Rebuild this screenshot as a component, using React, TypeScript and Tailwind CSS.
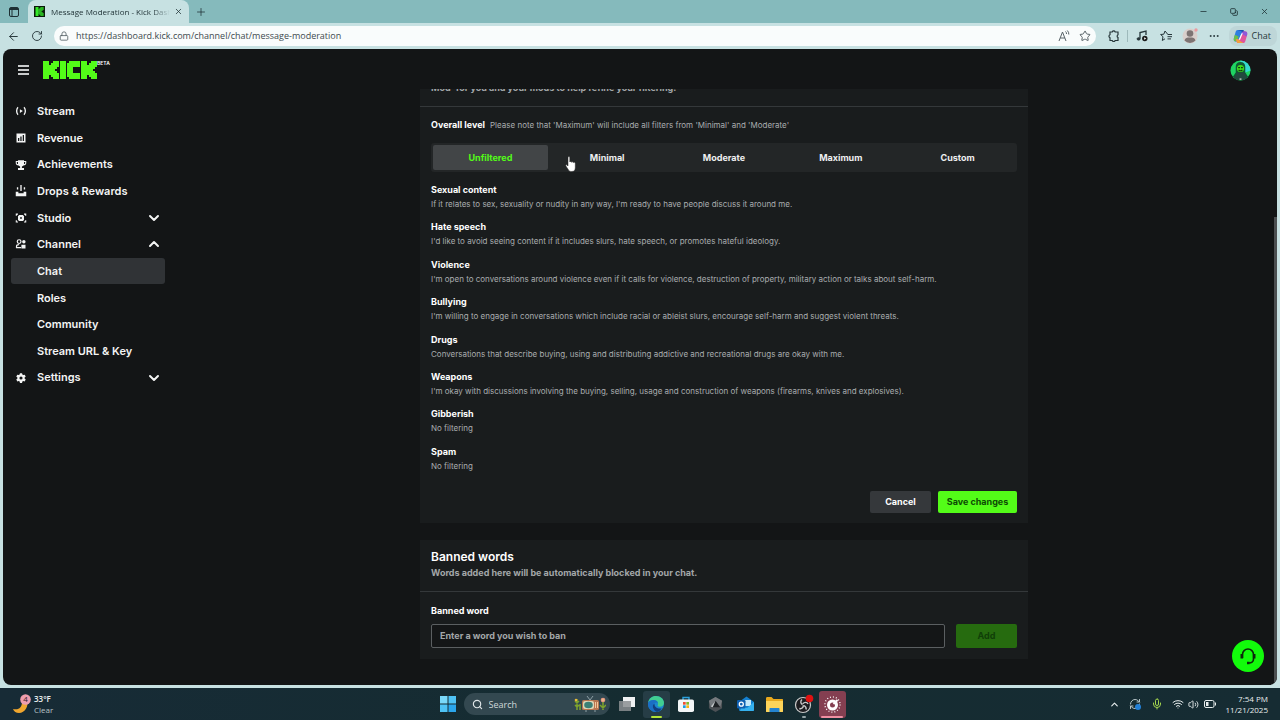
import React from "react";
import {
  ArrowLeft,
  ChevronDown,
  ChevronUp,
  Copy,
  Ellipsis,
  Lock,
  Mic,
  Minus,
  Plus,
  RefreshCw,
  RotateCw,
  Search,
  Star,
  Volume2,
  Wifi,
  X,
} from "lucide-react";

const FILTERS = [
  {
    title: "Sexual content",
    text: "If it relates to sex, sexuality or nudity in any way, I'm ready to have people discuss it around me.",
  },
  {
    title: "Hate speech",
    text: "I'd like to avoid seeing content if it includes slurs, hate speech, or promotes hateful ideology.",
  },
  {
    title: "Violence",
    text: "I'm open to conversations around violence even if it calls for violence, destruction of property, military action or talks about self-harm.",
  },
  {
    title: "Bullying",
    text: "I'm willing to engage in conversations which include racial or ableist slurs, encourage self-harm and suggest violent threats.",
  },
  {
    title: "Drugs",
    text: "Conversations that describe buying, using and distributing addictive and recreational drugs are okay with me.",
  },
  {
    title: "Weapons",
    text: "I'm okay with discussions involving the buying, selling, usage and construction of weapons (firearms, knives and explosives).",
  },
  { title: "Gibberish", text: "No filtering" },
  { title: "Spam", text: "No filtering" },
];

const LEVELS = ["Unfiltered", "Minimal", "Moderate", "Maximum", "Custom"];

function KickMark({ x = 0 }: { x?: number }) {
  return (
    <g transform={`translate(${x} 0)`}>
      <rect x="0" y="0" width="3" height="9" />
      <rect x="3" y="2" width="1" height="5" />
      <rect x="4" y="1" width="1" height="7" />
      <rect x="5" y="0" width="1" height="9" />
      <rect x="6" y="0" width="1" height="4" />
      <rect x="6" y="5" width="1" height="4" />
      <rect x="7" y="0" width="1" height="3" />
      <rect x="7" y="6" width="1" height="3" />
    </g>
  );
}

function KickLogo() {
  return (
    <svg
      viewBox="0 0 27 9"
      className="h-[18px] w-[54px] fill-[#53fc18]"
      shapeRendering="crispEdges"
      role="img"
      aria-label="Kick"
    >
      <KickMark />
      <rect x="8.5" y="0" width="3" height="9" />
      <rect x="13" y="0" width="5.5" height="3" />
      <rect x="12" y="1" width="3" height="7" />
      <rect x="13" y="6" width="5.5" height="3" />
      <KickMark x={19} />
    </svg>
  );
}

function StreamIcon() {
  return (
    <svg viewBox="0 0 16 16" className="size-3" fill="none" stroke="currentColor" strokeWidth="1.8">
      <path d="M4 3C1.600 5.600 1.600 10.400 4 13M12 3C14.400 5.600 14.400 10.400 12 13" />
      <path d="M6.500 5.500v5l4-2.500z" fill="currentColor" stroke="none" />
    </svg>
  );
}

function RevenueIcon() {
  return (
    <svg viewBox="0 0 16 16" className="size-3" fill="currentColor" fillRule="evenodd">
      <path d="M2 2h12v12H2zM4 8v4h1.700V8zM7.100 6v6h1.700V6zM10.300 4v8H12V4z" />
    </svg>
  );
}

function TrophyIcon() {
  return (
    <svg viewBox="0 0 16 16" className="size-3" fill="currentColor" fillRule="evenodd">
      <path d="M4 1.500h8v1.200h3v2.500c0 2-1.500 3-3.300 3.100A4 4 0 0 1 9.200 10v2H12v2.500H4V12h2.800v-2a4 4 0 0 1-2.500-1.700C2.500 8.200 1 7.200 1 5.200V2.700h3zM2.400 4v1.200c0 .9.500 1.400 1.600 1.600V4zM12 4v2.800c1.100-.2 1.600-.7 1.600-1.600V4z" />
    </svg>
  );
}

function DropsIcon() {
  return (
    <svg viewBox="0 0 16 16" className="size-3" fill="currentColor">
      <path d="M1 9h3.500v2h7V9H15v6H1z" />
      <path d="M7.100 0h1.800v8H7.100zM2.500 3h1.800v3H2.500zM11.700 3h1.800v3h-1.800z" />
    </svg>
  );
}

function StudioIcon() {
  return (
    <svg viewBox="0 0 16 16" className="size-3" fill="currentColor" fillRule="evenodd">
      <path d="M1 2h3v1.500H2.500V5H1zM12 2h3v3h-1.500V3.500H12zM1 11h1.500v1.500H4V14H1zM13.500 11H15v3h-3v-1.500h1.500z" />
      <path d="M5.500 4h5L12 5.500v5L10.500 12h-5L4 10.500v-5zM8 6.800a1.200 1.200 0 1 0 0 2.400 1.200 1.200 0 0 0 0-2.400z" />
    </svg>
  );
}

function ChannelIcon() {
  return (
    <svg viewBox="0 0 16 16" className="size-3" fill="none" stroke="currentColor" strokeWidth="1.600">
      <circle cx="5.500" cy="4.800" r="2.500" />
      <path d="M8 12.700H2v-1.500C2 9.600 3.200 8.800 5.500 8.800" />
      <circle cx="11.800" cy="5" r="2.300" fill="currentColor" stroke="none" />
      <path d="M8.500 9H14v5H8.500z" fill="currentColor" stroke="none" />
    </svg>
  );
}

function SettingsIcon() {
  return (
    <svg viewBox="0 0 16 16" className="size-3" fill="currentColor" fillRule="evenodd">
      <path d="M6.600 1.500h2.800l.4 1.900 1.200.7 1.900-.6 1.400 2.400-1.500 1.300v1.600l1.500 1.300-1.400 2.400-1.900-.6-1.200.7-.4 1.900H6.600l-.4-1.900-1.200-.7-1.900.6-1.400-2.400 1.500-1.300V7.200L1.700 5.900l1.400-2.400 1.900.6 1.200-.7zM8 5.900a2.100 2.100 0 1 0 0 4.200 2.100 2.100 0 0 0 0-4.200z" />
    </svg>
  );
}

const NAV = [
  { label: "Stream", icon: <StreamIcon /> },
  { label: "Revenue", icon: <RevenueIcon /> },
  { label: "Achievements", icon: <TrophyIcon /> },
  { label: "Drops & Rewards", icon: <DropsIcon /> },
  { label: "Studio", icon: <StudioIcon />, chevron: "down" },
  { label: "Channel", icon: <ChannelIcon />, chevron: "up" },
  { label: "Chat", active: true },
  { label: "Roles" },
  { label: "Community" },
  { label: "Stream URL & Key" },
  { label: "Settings", icon: <SettingsIcon />, chevron: "down" },
];

function TabStrip() {
  return (
    <div className="flex h-[23px] shrink-0 items-stretch bg-[#85babc] text-[#1d2f33]">
      <button aria-label="Tab actions" className="flex w-7 items-center justify-center">
        <svg viewBox="0 0 10 10" className="size-[10px]" fill="none" stroke="currentColor">
          <rect x="0.500" y="0.500" width="9" height="9" rx="1.500" />
          <path d="M1 2h8" strokeWidth="2" />
          <path d="M3 2v7" />
        </svg>
      </button>
      <div className="flex w-[161px] items-center rounded-t-lg bg-[#c7e1e2] pl-[6px]">
        <svg viewBox="-1 -1 10 11" className="size-[11px] shrink-0 bg-[#0b1a0b] fill-[#35e82a]">
          <KickMark />
        </svg>
        <span className="ml-[6px] w-[119px] whitespace-nowrap text-[8px] [mask-image:linear-gradient(to_right,black_85%,transparent)]">
          Message Moderation - Kick Dash
        </span>
        <button aria-label="Close tab" className="ml-1">
          <X className="size-[9px]" />
        </button>
      </div>
      <button aria-label="New tab" className="ml-1.5 flex items-center">
        <Plus className="size-3" strokeWidth={1.5} />
      </button>
      <div className="ml-auto flex items-center gap-[22px] pr-[11px]">
        <button aria-label="Minimize">
          <Minus className="size-[9px]" />
        </button>
        <button aria-label="Restore">
          <Copy className="size-2 -scale-x-100 rotate-90" strokeWidth={2.500} />
        </button>
        <button aria-label="Close window">
          <X className="size-[9px]" />
        </button>
      </div>
    </div>
  );
}

function CopilotIcon() {
  return (
    <svg viewBox="0 0 16 16" className="size-[15px]">
      <path d="M5 1h5c1.500 0 2 1 2.400 2.500L13 5h-2.500c-1.500 0-2 .8-2.400 2L6.800 11c-.5 1.500-1 2.300-2.300 2.300H3C1 13.300.4 11.500 1 9.500l1.700-6C3.200 1.800 3.800 1 5 1z" fill="#2f7fe0" />
      <path d="M5 1h5c1.500 0 2 1 2.400 2.500L13 5h-2.500L9 2.500z" fill="#1c4fb5" />
      <path d="M1 9.500l1-3.500 4 2-1.200 4-1.800 1.300C1 13.300.4 11.500 1 9.500z" fill="#6cc04a" />
      <path d="M11 15H6c-1.500 0-2-1-2.400-2.500L3 11h2.500c1.500 0 2-.8 2.400-2L9.200 5c.5-1.500 1-2.300 2.300-2.300H13c2 0 2.600 1.800 2 3.800l-1.700 6C12.800 14.200 12.200 15 11 15z" fill="#e0559d" />
      <path d="M11 15H6c-1.500 0-2-1-2.400-2.500L3 11h2.500L8 13z" fill="#f4a13c" />
      <path d="M9.200 5c.5-1.500 1-2.300 2.300-2.300H13c2 0 2.600 1.800 2 3.800l-.5 1.500z" fill="#8f58d8" />
      <path d="M9.200 4.500h1.300L7.500 11.500H6z" fill="#fff" />
    </svg>
  );
}

function Toolbar() {
  return (
    <div className="flex h-[26px] shrink-0 items-center bg-[#c7e1e2] text-[#26363a]">
      <button aria-label="Back" className="ml-[7px]">
        <ArrowLeft className="size-[13px]" strokeWidth={1.800} />
      </button>
      <button aria-label="Refresh" className="ml-[11px]">
        <RotateCw className="size-3" strokeWidth={1.800} />
      </button>
      <div className="ml-[11px] flex h-5 flex-1 items-center rounded-full bg-[#f9fcfc] px-[5px] text-[#566166]">
        <Lock className="size-[10px]" />
        <input
          aria-label="Address"
          defaultValue="https://dashboard.kick.com/channel/chat/message-moderation"
          className="ml-[7px] min-w-0 flex-1 bg-transparent text-[9px] text-[#3d4a4e] outline-none"
        />
        <button aria-label="Read aloud" className="flex">
          <svg viewBox="0 0 12 12" className="size-3" fill="none" stroke="currentColor">
            <path d="M1 11 4.500 2 8 11M2.300 8h4.500M7.500 1.500a3 3 0 0 1 1 2.500M9.300.5A5 5 0 0 1 10.800 4.500" />
          </svg>
        </button>
        <button aria-label="Add to favorites" className="ml-[9px]">
          <Star className="size-3" />
        </button>
      </div>
      <button aria-label="Extensions" className="ml-3">
        <svg viewBox="0 0 12 12" className="size-3" fill="none" stroke="currentColor" strokeWidth="1.200">
          <path d="M2 2h2.200a1.600 1.600 0 0 1 3 0H10v2.800a1.500 1.500 0 0 0 0 2.700V10.500H7.200a1.600 1.600 0 0 1-3 0H2V7.700a1.600 1.600 0 0 1 0-3z" />
        </svg>
      </button>
      <span className="ml-[7px] h-3 w-px bg-[#9db9bb]" />
      <button aria-label="Music" className="ml-2">
        <svg viewBox="0 0 12 12" className="size-3" fill="none" stroke="currentColor">
          <path d="M4 8.500V2.500l6-1.500v4" strokeWidth="1.300" />
          <ellipse cx="2.600" cy="8.900" rx="1.500" ry="1.200" fill="currentColor" />
          <circle cx="8.800" cy="8.500" r="2.700" fill="#1b1b1b" stroke="none" />
          <path d="M8.200 7.300v2.400l2-1.200z" fill="#fff" stroke="none" />
        </svg>
      </button>
      <button aria-label="Favorites" className="ml-3">
        <svg viewBox="0 0 12 12" className="size-3" fill="none" stroke="currentColor">
          <path d="M7.500 4 5 1 3.800 4.200.6 4.500 3 6.700 2.300 10.500 5 8.800M7.500 4.500H12M7.500 6.700H12M7.500 8.900H11" />
        </svg>
      </button>
      <button aria-label="Profile" className="ml-[10px]">
        <svg viewBox="0 0 16 16" className="size-4">
          <circle cx="8" cy="8" r="7.500" fill="#d9cfcb" />
          <circle cx="8" cy="5.500" r="3.300" fill="#7d7473" />
          <path d="M2.500 12.500C3 10 5 9.500 8 9.500s5 .5 5.500 3A7.500 7.500 0 0 1 2.500 12.500z" fill="#7d7473" />
          <circle cx="14" cy="2" r="1.700" fill="#ea9ba0" />
        </svg>
      </button>
      <button aria-label="More" className="ml-[10px]">
        <Ellipsis className="size-3" />
      </button>
      <button className="mr-[3px] ml-[9px] flex h-5 items-center gap-1 rounded-lg bg-[#bed6d8] px-1 pr-[6px] text-[9px]">
        <CopilotIcon />
        Chat
      </button>
    </div>
  );
}

function PageHeader() {
  return (
    <header className="flex h-10 shrink-0 items-center pt-0.5 pr-[26px] pl-[15px]">
      <button aria-label="Menu" className="flex w-[11px] flex-col gap-[2px]">
        <span className="h-[2px] bg-[#c9cbcc]" />
        <span className="h-[2px] bg-[#c9cbcc]" />
        <span className="h-[2px] bg-[#c9cbcc]" />
      </button>
      <a href="#kick" className="ml-[14px] flex items-start">
        <KickLogo />
        <span className="text-[5px] leading-[5px] font-semibold text-white">BETA</span>
      </a>
      <button aria-label="Account" className="ml-auto">
        <svg viewBox="0 0 22 22" className="size-[21px]">
          <circle cx="11" cy="11" r="10.500" fill="#1fd463" />
          <path d="M11 .5A10.500 10.500 0 0 1 21.500 11L16 13 11 3z" fill="#35d9d0" />
          <path d="M3 17.500 6 13V7c0-3 2-5 5-5s5 2 5 5v6l3 4.500A10.500 10.500 0 0 1 3 17.500z" fill="#0f5a33" />
          <path d="M4 18.500 7 13h8l3 5.500A10.500 10.500 0 0 1 4 18.500z" fill="#23483e" />
          <circle cx="11" cy="9" r="3.700" fill="#3fe01d" />
          <path d="M8.500 8h2M11.500 8h2M9 10.500q2 1.500 4 0" stroke="#123d12" strokeWidth="1.200" fill="none" />
          <path d="M11 19v2" stroke="#a8b3ae" strokeWidth="2" />
        </svg>
      </button>
    </header>
  );
}

function Sidebar() {
  return (
    <nav className="w-[173px] shrink-0 pt-[9px] pr-[11px] pl-2">
      <ul className="grid h-[293px] auto-rows-fr text-[11px] font-semibold text-[#f3f4f4]">
        {NAV.map((item) => (
          <li key={item.label}>
            <a
              href="#nav"
              className={`flex h-full items-center rounded-[3px] pr-[3px] pl-1 ${item.active ? "bg-[#303336]" : ""}`}
            >
              <span className="w-[22px]">{item.icon}</span>
              {item.label}
              {item.chevron === "down" && <ChevronDown className="ml-auto size-4" strokeWidth={3} />}
              {item.chevron === "up" && <ChevronUp className="ml-auto size-4" strokeWidth={3} />}
            </a>
          </li>
        ))}
      </ul>
    </nav>
  );
}

function ModerationCard() {
  return (
    <section className="shrink-0 bg-[#191c1d]">
      <p className="border-b border-[#34383a] px-[11px] pt-2 pb-[11px] text-[9px] leading-[14px] font-bold text-[#a3a7a9]">
        Mod&apos; for you and your mods to help refine your filtering.
      </p>
      <div className="px-[11px] pt-[11px] pb-[10px]">
        <div className="flex items-center gap-[5px] leading-[14px]">
          <h2 className="text-[9px] font-bold text-white">Overall level</h2>
          <p className="text-[8px] text-[#a9adaf]">
            Please note that &apos;Maximum&apos; will include all filters from &apos;Minimal&apos; and &apos;Moderate&apos;
          </p>
        </div>
        <div className="mt-[11px] grid h-[29px] grid-cols-5 gap-0.5 rounded-[3px] bg-[#232627] p-0.5 text-[9px] font-bold">
          {LEVELS.map((level, i) => (
            <button
              key={level}
              className={`rounded-[2px] ${i === 0 ? "bg-[#424547] text-[#53fc18]" : "text-[#eeeff0]"}`}
            >
              {level}
            </button>
          ))}
        </div>
        <dl className="mt-[10px] grid h-[299px] auto-rows-fr">
          {FILTERS.map((f) => (
            <div key={f.title}>
              <dt className="text-[9px] leading-[15px] font-bold text-white">{f.title}</dt>
              <dd className="text-[8px] leading-[14px] text-[#a9adaf]">{f.text}</dd>
            </div>
          ))}
        </dl>
        <div className="mt-[10px] flex justify-end gap-[7px] text-[9px] font-bold">
          <button className="h-[22px] min-w-[61px] rounded-[2px] bg-[#35383b] px-2 text-white">Cancel</button>
          <button className="h-[22px] min-w-[79px] rounded-[2px] bg-[#53fc18] px-2 text-[#0d4a05]">
            Save changes
          </button>
        </div>
      </div>
    </section>
  );
}

function BannedWordsCard() {
  return (
    <section className="shrink-0 bg-[#191c1d]">
      <div className="border-b border-[#34383a] px-[11px] pt-2 pb-[10px]">
        <h2 className="text-[12px] leading-[17px] font-semibold text-white">Banned words</h2>
        <p className="text-[9px] leading-4 font-bold text-[#a3a7a9]">
          Words added here will be automatically blocked in your chat.
        </p>
      </div>
      <form className="px-[11px] pt-[11px] pb-[11px]">
        <label htmlFor="banned-word" className="block text-[9px] leading-4 font-bold text-white">
          Banned word
        </label>
        <div className="mt-[5px] flex h-6 gap-[11px]">
          <input
            id="banned-word"
            placeholder="Enter a word you wish to ban"
            className="min-w-0 flex-1 rounded-[2px] border border-[#5b5f61] bg-[#141617] px-2 text-[9px] font-bold text-white placeholder:text-[#a3a7a9]"
          />
          <button type="button" className="w-[61px] rounded-[2px] bg-[#266b0f] text-[9px] font-bold text-[#103f08]">
            Add
          </button>
        </div>
      </form>
    </section>
  );
}

function HandCursor() {
  return (
    <svg viewBox="0 0 11 16" className="pointer-events-none absolute top-[156px] left-[565px] h-4 w-[11px]">
      <path
        d="M3 1.500C3 .3 4.800.3 4.800 1.500V6c.3-.8 1.700-.7 1.800.3.400-.8 1.700-.6 1.800.4.500-.6 1.900-.4 1.900.8v4c0 2.700-1 4-3.500 4-2.200 0-3-.8-3.800-2.300L.9 10c-.5-1 .7-1.600 1.300-.8L3 10z"
        fill="#fff"
        stroke="#222"
        strokeWidth="0.500"
      />
    </svg>
  );
}

function SupportButton() {
  return (
    <button
      aria-label="Support"
      className="absolute right-[13px] bottom-[13px] flex size-8 items-center justify-center rounded-full bg-[#12fb0b]"
    >
      <svg viewBox="0 0 18 18" className="size-[18px]" fill="none" stroke="#0d260c" strokeWidth="1.600">
        <path d="M3.500 11V7.500a5.500 5.500 0 0 1 11 0V12c0 2.500-2 4-5 4" />
        <path d="M2.800 7v4.500M15.200 7v4.500" strokeWidth="2.600" />
        <path d="M8 16h2.500" strokeWidth="2.400" />
      </svg>
    </button>
  );
}

function TaskbarApps() {
  return (
    <div className="ml-[5px] flex items-center">
      <button aria-label="Start">
        <svg viewBox="0 0 16 16" className="size-4" fill="#4fc3f5">
          <path d="M0 0h7.500v7.500H0z" fill="#7ad9fa" />
          <path d="M8.500 0H16v7.500H8.500zM0 8.500h7.500V16H0z" />
          <path d="M8.500 8.500H16V16H8.500z" fill="#2ba6ec" />
        </svg>
      </button>
      <label className="ml-2 flex h-[22px] w-[146px] items-center rounded-full bg-[#334850] pr-1 pl-2">
        <Search className="size-[11px] text-[#dfe6e8]" strokeWidth={2.500} />
        <input
          aria-label="Search"
          placeholder="Search"
          className="ml-[6px] w-0 flex-1 bg-transparent text-[9px] placeholder:text-[#cfd8da]"
        />
        <svg viewBox="0 0 32 16" className="h-4 w-8">
          <path d="M3 3v11M1 5l2 2 2-2M1 9l2 2 2-2M6 8v6M29 5v9M26 9l3 3 3-3" stroke="#7da32c" strokeWidth="1.500" fill="none" />
          <circle cx="2" cy="4" r="1.300" fill="#e8b93d" />
          <circle cx="29" cy="4" r="2.300" fill="#e79a84" />
          <circle cx="29" cy="4" r="0.800" fill="#f7e08a" />
          <rect x="8" y="4" width="17" height="10" rx="1.500" fill="#b87550" />
          <rect x="9" y="5" width="11" height="8" rx="2" fill="#dbd6b8" />
          <ellipse cx="14.500" cy="9" rx="4.300" ry="3.200" fill="#3c8076" />
          <path d="M21.500 6v6M23.500 6v6" stroke="#f2c69b" />
          <path d="M13 0l3 4 3-4M11 15h2M20 15h2" stroke="#8e9fa5" fill="none" />
        </svg>
      </label>
      <button aria-label="Task view" className="ml-[9px]">
        <svg viewBox="0 0 16 14" className="h-[14px] w-4">
          <rect x="4" y="0" width="12" height="10" fill="#eff1f2" />
          <rect x="0" y="4" width="12" height="10" fill="#8b8f92" opacity="0.850" />
        </svg>
      </button>
      <button aria-label="Edge" className="ml-2 flex h-[27px] w-[27px] flex-col items-center justify-between rounded-[3px] bg-[#263d46] pt-[5px]">
        <svg viewBox="0 0 16 16" className="size-4">
          <circle cx="8" cy="8" r="8" fill="#1c87d0" />
          <path d="M0 7C1 2.500 4 0 8 0c4.500 0 8 3 8 6.800 0 2.500-1.800 4-4.200 4-1.800 0-2.600-.7-2-1.700C10.800 6.500 8.700 4 5.500 4 3 4 .8 5.300 0 7z" fill="#41cd91" />
          <path d="M0 7c.8-1.700 3-3 5.500-3 2.300 0 4 1 4.500 3-3 -1.500-6 .7-5 4.500.5 2 2 3.500 4 4.400A8 8 0 0 1 0 7z" fill="#1b6fc4" />
          <path d="M5 11.500c-.4-1.700 0-3.200 1.500-4C6.200 10.500 8.500 13 13.800 12.500A8 8 0 0 1 9 16c-2-.9-3.500-2.500-4-4.500z" fill="#123f80" />
        </svg>
        <span className="h-[2px] w-[11px] rounded-full bg-[#b4e436]" />
      </button>
      <button aria-label="Store" className="ml-2">
        <svg viewBox="0 0 16 16" className="size-4">
          <path d="M5 4V1.500h6V4" fill="none" stroke="#2ba0dc" strokeWidth="1.400" />
          <rect y="3.500" width="16" height="12.500" rx="1.800" fill="#f3f6f7" />
          <path d="M5 6h2.700v2.700H5z" fill="#ef5131" />
          <path d="M8.300 6H11v2.700H8.300z" fill="#7fb92f" />
          <path d="M5 9.300h2.700V12H5z" fill="#1b9de3" />
          <path d="M8.300 9.300H11V12H8.300z" fill="#f9b614" />
        </svg>
      </button>
      <button aria-label="App" className="ml-[14px]">
        <svg viewBox="0 0 16 16" className="size-[15px]">
          <path d="M8 0l7 4v8l-7 4-7-4V4z" fill="#4c5155" />
          <path d="M8 0l7 4-2 7L8 4 3 11 1 4z" fill="#74797d" />
          <path d="M8 4l5 7H5z" fill="#1d2124" />
          <path d="M8 4L5 11 3 10z" fill="#c5c9cb" />
        </svg>
      </button>
      <button aria-label="Outlook" className="ml-[14px]">
        <svg viewBox="0 0 17 16" className="h-4 w-[17px]">
          <path d="M2 6l7.500-5.500L17 6v7.500c0 1-.5 1.500-1.500 1.500h-12C2.500 15 2 14.500 2 13.500z" fill="#1480cf" />
          <path d="M5 4h9v6H5z" fill="#c4e8fa" />
          <path d="M17 6l-7 6-5-2-2 5h12.500c1 0 1.500-.5 1.500-1.500z" fill="#35b1ee" />
          <rect x="0" y="4" width="8.500" height="8.500" rx="1.200" fill="#0e5fb0" />
          <circle cx="4.300" cy="8.200" r="2" fill="none" stroke="#fff" strokeWidth="1.300" />
        </svg>
      </button>
      <button aria-label="File Explorer" className="ml-3">
        <svg viewBox="0 0 17 15" className="h-[15px] w-[17px]">
          <path d="M0 1.500C0 .5.500 0 1.500 0h4L7.500 2H16c.7 0 1 .3 1 1v11c0 .7-.3 1-1 1H1c-.7 0-1-.3-1-1z" fill="#e8a91e" />
          <path d="M0 4h17v10c0 .7-.3 1-1 1H1c-.7 0-1-.3-1-1z" fill="#fdd45a" />
          <path d="M3.500 15v-3c0-.7.3-1 1-1h8c.7 0 1 .3 1 1v3z" fill="#2483cf" />
        </svg>
      </button>
      <button aria-label="OBS" className="ml-[11px] flex flex-col items-center">
        <svg viewBox="0 0 20 20" className="size-5">
          <circle cx="9" cy="11" r="7.500" fill="#1d1d20" stroke="#c9c9c9" strokeWidth="1.200" />
          <path d="M8 5.500c-1.800 1.500-1.500 4 .5 5.200M14 10c-1-2-3.500-2.200-5.200-.3M5.300 14.500c2.300.7 4.200-.8 4-3.300M12 15.500c.5-1.500-.3-3-2-4" fill="none" stroke="#c9c9c9" strokeWidth="1.400" />
          <circle cx="15.500" cy="4.500" r="3.800" fill="#e01111" />
        </svg>
        <span className="mt-[2px] -mb-1 h-[2px] w-1 rounded-full bg-[#93a2a6]" />
      </button>
      <button aria-label="Recorder" className="ml-[5px] flex h-[27px] w-[27px] flex-col items-center justify-between rounded-[3px] bg-[#843f51] pt-[5px]">
        <svg viewBox="0 0 17 17" className="size-[17px]" fill="none" stroke="#fff">
          <circle cx="8.500" cy="8.500" r="7.600" strokeWidth="1.300" strokeDasharray="1 2" />
          <circle cx="8.500" cy="9" r="4" strokeWidth="3" />
          <path d="M9.500 8l4-4" strokeWidth="2" />
        </svg>
        <span className="h-[2px] w-[22px] rounded-full bg-[#f08fa2]" />
      </button>
    </div>
  );
}

function Taskbar() {
  return (
    <footer className="grid h-8 shrink-0 grid-cols-[1fr_auto_1fr] items-center bg-linear-to-r from-[#172b36] via-[#152c31] to-[#162c33] text-[8px] leading-[11px] text-[#e8eeee]">
      <button className="flex items-center gap-[3px] justify-self-start pl-[13px] text-left">
        <svg viewBox="0 0 18 20" className="h-5 w-[18px]">
          <path d="M14 6c2 6-2 13-8 13-3 0-5-1.500-6-4 6 1.500 9-2 9-7z" fill="#f0a62e" />
          <circle cx="12.500" cy="5.500" r="5.300" fill="#ee9dae" />
          <text x="12.500" y="8.300" fontSize="8" textAnchor="middle" fill="#37212a">
            4
          </text>
        </svg>
        <span>
          <b className="block font-semibold">33°F</b>
          <span className="block text-[#b7c4c6]">Clear</span>
        </span>
      </button>
      <TaskbarApps />
      <div className="flex items-center justify-self-end pr-3">
        <ChevronUp className="size-[11px]" strokeWidth={2.500} />
        <span className="relative ml-[9px]">
          <RefreshCw className="size-3 text-[#b8c6c9]" />
          <span className="absolute right-0 bottom-0 size-[6px] rounded-full bg-[#2381d8]" />
        </span>
        <Mic className="ml-[10px] size-3 text-[#a4d64e]" />
        <Wifi className="ml-[9px] size-3" />
        <Volume2 className="ml-1 size-[11px]" />
        <svg viewBox="0 0 12 8" className="ml-[5px] h-2 w-3" fill="none" stroke="currentColor">
          <rect x="0.500" y="0.500" width="9.500" height="7" rx="1.500" />
          <path d="M11.500 2.500v3" />
          <path d="M2 2h2.500v4H2z" fill="currentColor" stroke="none" />
        </svg>
        <div className="ml-[10px] text-right">
          <p>7:54 PM</p>
          <p>11/21/2025</p>
        </div>
      </div>
    </footer>
  );
}

export default function App() {
  return (
    <div className="relative flex h-screen flex-col overflow-hidden bg-[#c7e1e2] font-['Open_Sans','Noto_Sans',sans-serif]">
      <TabStrip />
      <Toolbar />
      <div className="relative mx-[3px] mb-[3px] flex min-h-0 flex-1 flex-col overflow-hidden rounded-lg bg-[#131516] font-['Inter',sans-serif]">
        <PageHeader />
        <div className="flex min-h-0 flex-1">
          <Sidebar />
          <main className="flex min-w-0 flex-1 flex-col justify-end overflow-hidden pr-[5px]">
            <div className="mx-auto flex w-full max-w-[608px] flex-col gap-[17px] pb-[26px]">
              <ModerationCard />
              <BannedWordsCard />
            </div>
          </main>
        </div>
        <div className="absolute right-0 bottom-0 h-[468px] w-[3px] bg-[#4b4e50]" />
        <SupportButton />
      </div>
      <Taskbar />
      <HandCursor />
    </div>
  );
}
